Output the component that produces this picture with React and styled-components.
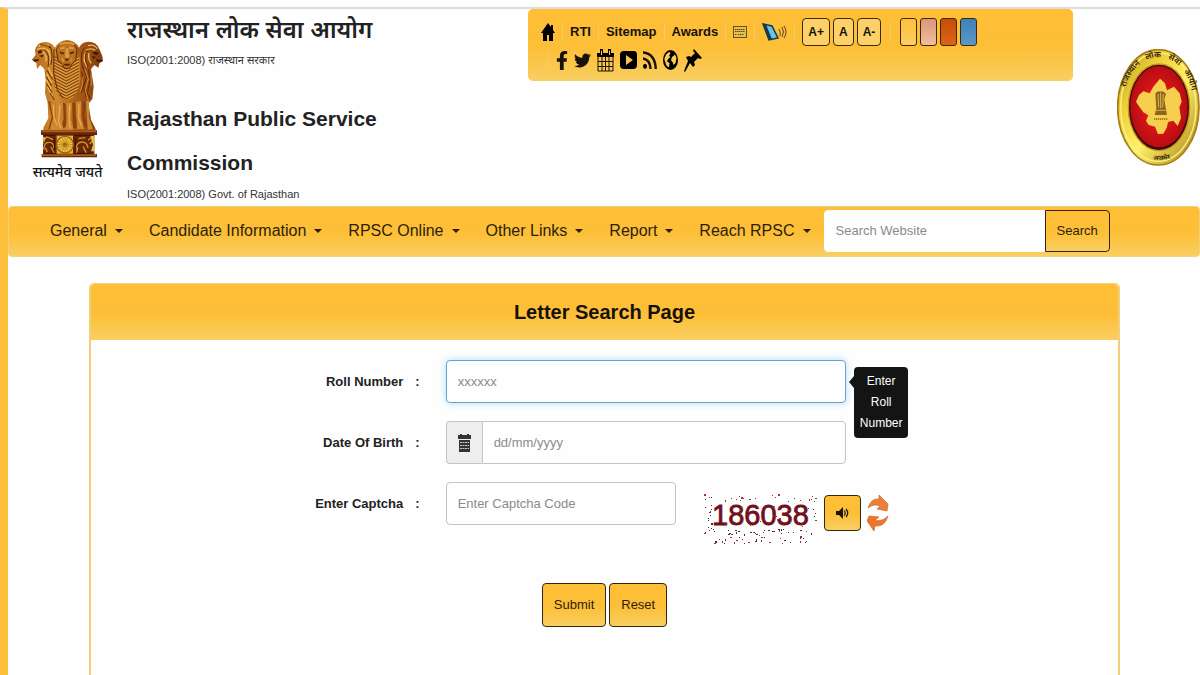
import React from "react";
import styled, { createGlobalStyle, css } from "styled-components";
import { FaFacebookF, FaTwitter } from "react-icons/fa";

const sans = '"Liberation Sans", "Noto Sans", sans-serif';
const gold = "linear-gradient(to bottom, #ffbe36 0%, #fdbf38 55%, #f9cf62 100%)";

const GlobalStyle = createGlobalStyle`
  *, *::before, *::after { box-sizing: border-box; }
  html { background: #fefefe; }
  body {
    margin: 0;
    font-family: ${sans};
    font-size: 13px;
    line-height: 20px;
    color: #222;
  }
  h1, h2, p, ul { margin: 0; padding: 0; }
  ul { list-style: none; }
  a { color: inherit; text-decoration: none; }
  input, button { font: inherit; }
`;

const Page = styled.div`
  padding-top: 7px;
`;

const Shell = styled.div`
  border-top: 2px solid #dcdcdc;
  border-left: 8px solid #fdbe3c;
  min-height: calc(100vh - 7px);
`;

const Header = styled.header`
  display: flex;
  align-items: flex-start;
  height: 197px;
`;

const Emblem = styled.figure`
  margin: 0;
  width: 119px;
  padding-top: 30px;
  display: flex;
  flex-direction: column;
  align-items: center;
  flex: none;
`;

const Motto = styled.figcaption`
  font-size: 14px;
  line-height: 28px;
  font-weight: 500;
  color: #111;
  white-space: nowrap;
`;

const Titles = styled.div`
  width: 401px;
  flex: none;
`;

const TitleHindi = styled.h1`
  font-size: 24px;
  line-height: 42px;
  font-weight: 600;
  white-space: nowrap;
`;

const Iso = styled.p`
  font-size: 11px;
  line-height: 18px;
  color: #333;
  white-space: nowrap;
`;

const Title = styled.h2`
  font-size: 21px;
  line-height: 44px;
  padding-top: 28px;
  max-width: 300px;
`;

const Tools = styled.div`
  flex: 1;
  max-width: 545px;
  height: 72px;
  padding: 8px 13px 0;
  border-radius: 5px;
  background: ${gold};
  color: #17120a;
`;

const ToolRow = styled.ul`
  display: flex;
  align-items: center;
  height: ${(p) => (p.$second ? 26 : 30)}px;
`;

const ToolItem = styled.li`
  display: flex;
  align-items: center;
  gap: ${(p) => p.$gap || 3}px;
  font-size: 13px;
  font-weight: 700;
`;

const Rule = styled.li`
  width: 1px;
  height: 18px;
  background: #f3cb74;
  margin: 0 ${(p) => (p.$wide ? 9 : 7)}px;
`;

const IconLink = styled.a`
  display: flex;
  svg { display: block; }
`;

const SizeButton = styled.button`
  height: 28px;
  padding: 0 5px;
  border: 1px solid #3a2a08;
  border-radius: 4px;
  background: #fdd068;
  color: #17120a;
  font-size: 12px;
  font-weight: 700;
`;

const Swatch = styled.button`
  width: 17px;
  height: 28px;
  padding: 0;
  border: 1px solid #3a2a08;
  border-radius: 3px;
  background: ${(p) => p.$fill};
`;

const SealBox = styled.div`
  margin-left: auto;
  padding-top: 40px;
  svg { display: block; }
`;

const Nav = styled.nav`
  display: flex;
  align-items: center;
  height: 51px;
  padding: 0 28px 2px;
  border: 1px solid #f3cf80;
  border-radius: 4px;
  background: ${gold};
`;

const NavLink = styled.a`
  display: flex;
  align-items: center;
  gap: 8px;
  padding: 0 13px;
  font-size: 16px;
  line-height: 24px;
  color: #2c1e08;
  white-space: nowrap;
  &::after {
    content: "";
    border: 4px solid transparent;
    border-top-color: currentColor;
    border-bottom: 0;
  }
`;

const SearchForm = styled.form`
  display: flex;
  height: 42px;
`;

const fieldBase = css`
  min-width: 0;
  height: 43px;
  padding: 0 11px;
  border: 1px solid #c4c4c4;
  border-radius: 4px;
  background: #fefefe;
  color: #555;
  font-size: 13px;
  outline: 0;
  &::placeholder { color: #8b8b8b; opacity: 1; }
`;

const SearchInput = styled.input`
  ${fieldBase}
  width: 221px;
  height: 42px;
  border-color: #fefefe;
  border-radius: 4px 0 0 4px;
`;

const Button = styled.button`
  height: ${(p) => p.$height || 44}px;
  padding: 0 11px;
  border: 1px solid #33260b;
  border-radius: ${(p) => (p.$attached ? "0 4px 4px 0" : "4px")};
  background: ${gold};
  color: #2c1e08;
  font-size: 13px;
`;

const Panel = styled.main`
  margin: 26px 80px 0 81px;
  border: 1px solid #f2d078;
  border-width: 1px 2px;
  border-bottom: 0;
  border-radius: 5px 5px 0 0;
  min-height: calc(100vh - 283px);
`;

const PanelTitle = styled.h1`
  height: 56px;
  line-height: 57px;
  text-align: center;
  font-size: 20px;
  color: #15100a;
  background: ${gold};
  border-radius: 4px 4px 0 0;
`;

const Form = styled.form`
  padding-top: 20px;
`;

const Row = styled.div`
  display: grid;
  grid-template-columns: 32% 39% 1fr;
  column-gap: 26px;
  align-items: center;
  margin-bottom: 18px;
`;

const Label = styled.label`
  display: flex;
  justify-content: flex-end;
  gap: 12px;
  font-weight: 700;
`;

const Field = styled.div`
  position: relative;
  display: flex;
  align-items: center;
  height: 43px;
`;

const Input = styled.input`
  ${fieldBase}
  flex: ${(p) => (p.$short ? "0 0 230px" : "1")};
  ${(p) => p.$active && css`
    border-color: #5fa5cf;
    box-shadow: 0 0 9px #b5dcf3;
  `}
  ${(p) => p.$joined && css`border-radius: 0 4px 4px 0;`}
`;

const Addon = styled.span`
  display: grid;
  place-items: center;
  width: 36px;
  height: 43px;
  border: 1px solid #c4c4c4;
  border-right: 0;
  border-radius: 4px 0 0 4px;
  background: #eee;
`;

const Tooltip = styled.div`
  position: absolute;
  z-index: 1;
  top: 7px;
  left: 100%;
  margin-left: 8px;
  width: 54px;
  padding: 4px 5px;
  border-radius: 4px;
  background: #141414;
  color: #fff;
  text-align: center;
  font-size: 12px;
  line-height: 21px;
  &::before {
    content: "";
    position: absolute;
    top: 9px;
    left: -5px;
    border: 6px solid transparent;
    border-right: 5px solid #141414;
    border-left: 0;
  }
`;

const Captcha = styled.div`
  display: flex;
  align-items: center;
  padding-left: 28px;
  gap: 6px;
  height: 43px;
`;

const CaptchaImage = styled.svg`
  flex: none;
  margin-top: 30px;
`;

const AudioButton = styled.button`
  display: grid;
  place-items: center;
  flex: none;
  width: 37px;
  height: 36px;
  margin-top: 19px;
  padding: 0;
  border: 1px solid #33260b;
  border-radius: 4px;
  background: ${gold};
`;

const RefreshButton = styled.button`
  flex: none;
  margin-top: 19px;
  padding: 0;
  border: 0;
  background: none;
  svg { display: block; }
`;

const Actions = styled.div`
  display: flex;
  justify-content: center;
  gap: 3px;
  padding-top: 40px;
`;

function Lions() {
  const chest = [];
  for (let y = 88; y < 210; y += 9) {
    chest.push(`M128 ${y - 8}L166 ${y + 12}L204 ${y - 8}`);
  }
  return (
    <svg width="73" height="119" viewBox="60 28 219 357" role="img" aria-label="Emblem">
      <defs>
        <linearGradient id="body" x1="0" x2="1">
          <stop offset="0" stopColor="#b5671c" />
          <stop offset=".35" stopColor="#d08a2e" />
          <stop offset=".6" stopColor="#b06018" />
          <stop offset="1" stopColor="#7d380d" />
        </linearGradient>
        <clipPath id="mane">
          <path d="M128 80Q166 60 206 80L208 150Q200 205 168 210Q136 205 126 150Z" />
        </clipPath>
      </defs>
      <path fill="url(#body)" d="M62 90L74 76L72 62Q78 36 104 37Q122 38 132 54Q142 33 168 31Q194 33 204 54Q212 36 232 36Q258 36 266 60L274 80L276 94L266 100L262 114L250 106L240 118L248 170L244 208L232 222L240 270L254 298L252 306L96 306L98 292L112 266L110 220L102 190L104 150L100 118L88 106L78 118L76 100Z" />
      <path fill="#8b420f" d="M111 212Q124 226 132 218L136 290L120 300L112 298L122 262ZM156 218L164 222L166 292L150 298L158 266ZM184 220L192 218L194 260L202 292L186 298ZM214 214L226 218L220 258L232 294L214 290Z" />
      <path fill="#cf8630" d="M118 220L132 219L134 262L144 292L132 300L116 300L126 264ZM137 218L154 220L150 270L158 298L138 300ZM167 220L183 219L180 266L188 300L162 300L170 268ZM195 217L211 215L210 262L220 298L198 298ZM225 214L234 212L234 264L246 298L230 300Z" />
      <path fill="none" stroke="#eab859" strokeWidth="3" d="M128 226L129 262L138 288M147 226L143 276L149 296M176 226L174 270L178 296M204 224L203 262L211 290" />
      <path fill="#c78026" d="M128 80Q166 60 206 80L208 150Q200 205 168 210Q136 205 126 150Z" />
      <g clipPath="url(#mane)">
        <path d={chest.join("")} fill="none" stroke="#6a3009" strokeWidth="2.5" />
        <path d={chest.join("")} fill="none" stroke="#e9ba5a" strokeWidth="2" transform="translate(0 4)" />
      </g>
      <path fill="#ba711f" stroke="#602707" strokeWidth="3" d="M136 60Q145 38 168 37Q190 38 198 60L194 92L181 106L176 116L160 116L154 104L141 92Z" />
      <path fill="#5a2507" d="M147 66L161 69L157 74L148 72ZM175 69L190 65L188 71L178 74ZM161 87H174L170 93H165ZM156 102H180L172 108H163Z" />
      <path fill="#d99c3f" d="M164 56H172L174 84H162ZM147 54L162 50L160 58L148 59ZM174 50L190 54L187 58L174 59ZM151 82L160 91L156 99ZM183 82L178 94L181 99ZM142 43Q168 29 195 43L187 46Q168 38 149 46Z" />
      <path fill="#3b1705" d="M80 64L94 62L91 70L83 72ZM66 90L84 88L82 94L70 96ZM254 65L264 72L256 76L244 70ZM254 89L274 91L272 96L258 96ZM84 78L98 76L94 83ZM243 79L255 82L247 87Z" />
      <path fill="none" stroke="#efb957" strokeWidth="4" d="M82 51Q98 38 114 50M78 60Q98 48 116 66M96 66Q109 77 104 95M109 59Q123 77 114 102M112 114L124 140M107 132L122 160M107 150L120 178M110 172L125 200M231 48Q248 42 259 57M224 62Q240 53 253 62M224 68Q214 88 226 106M234 70Q230 88 241 101M218 90L228 112" />
      <path fill="none" stroke="#642806" strokeWidth="3" d="M87 45Q105 42 120 56M100 60Q120 78 111 110M116 48Q128 67 120 105M108 122L125 150M106 141L122 169M107 162L123 189M117 190L130 211M220 54Q205 72 216 115M230 61Q215 80 231 112M214 110L226 140L218 173L226 204M232 119L237 150L229 192L237 207M211 125L220 158L211 190M129 58L128 130L139 180L156 205" />
      <path fill="none" stroke="#d08b31" strokeWidth="3" d="M222 119L232 148L223 181L231 211M216 142L215 162L207 188M240 134L241 169" />
      <path fill="#662708" d="M90 302H258V316H250V373H258V383H92V373H96V316H90Z" />
      <path fill="#a95e1c" d="M92 302H256V308H92ZM92 374H256V379H92Z" />
      <path fill="#e4b034" d="M137 318H186V372H137Z" />
      <circle cx="162" cy="345" r="25" fill="#f0c83d" stroke="#9c5d12" strokeWidth="4" />
      <path fill="none" stroke="#a56a17" strokeWidth="2" d="M162 321V369M138 345H186M145 328L179 362M179 328L145 362M153 323L171 367M171 323L153 367M140 336L184 354M184 336L140 354" />
      <circle cx="162" cy="345" r="6" fill="#a9681a" />
      <path fill="none" stroke="#d99232" strokeWidth="4" d="M98 360Q100 337 113 338Q130 338 128 355M103 354L109 367M120 352L130 370M98 330L108 322L126 330M194 361Q197 337 213 337Q228 337 231 355M201 353L196 370M216 350L226 370M236 343L247 330M231 332L245 321M202 327L223 324" />
      <path fill="#e7c23d" d="M238 319H250V365H240L246 345ZM96 321L104 324L98 343Z" />
      <path fill="none" stroke="#35150a" strokeWidth="3" d="M99 317H134M190 317H239M100 371H134M189 371H238M130 326V366M193 325V368" />
    </svg>
  );
}

function Seal() {
  return (
    <svg width="83" height="117" viewBox="51 57 249 351" role="img" aria-label="RPSC Ajmer">
      <defs>
        <linearGradient id="ring" x1="0" y1="0" x2="1" y2="1">
          <stop offset="0" stopColor="#bd981d" />
          <stop offset=".3" stopColor="#eed239" />
          <stop offset=".55" stopColor="#fff06a" />
          <stop offset="1" stopColor="#a58010" />
        </linearGradient>
        <radialGradient id="red">
          <stop offset=".4" stopColor="#e01818" />
          <stop offset="1" stopColor="#b80c12" />
        </radialGradient>
        <path id="upper" d="M78 276C52 172 103 82 176 82C249 82 298 172 273 286" />
        <path id="lower" d="M130 380Q180 404 240 374" />
      </defs>
      <ellipse cx="175" cy="232" rx="122" ry="173" fill="url(#ring)" stroke="#a67d17" strokeWidth="5" />
      <ellipse cx="175" cy="231" rx="113" ry="163" fill="none" stroke="#fff083" strokeWidth="4" />
      <ellipse cx="177" cy="232" rx="92" ry="130" fill="#3b0c0a" stroke="#c8971c" strokeWidth="4" />
      <ellipse cx="177" cy="230" rx="86" ry="122" fill="url(#red)" />
      <path fill="#f7cf4e" d="M180 146L195 160L201 181L222 170L239 190L245 215L238 232L243 264L233 288L220 272L204 276L201 292L190 311L174 312L165 290L146 285L138 272L145 256L130 247L118 230L108 215L117 195L130 184L149 190L160 170Z" />
      <path fill="#8a651d" d="M166 191Q173 181 181 185Q190 181 198 192L193 207L197 233L201 255H164L169 234L167 207Z" />
      <path fill="none" stroke="#e0b44d" strokeWidth="3" d="M174 192L176 232M182 188V235M190 192L188 232M168 241H197" />
      <path fill="none" stroke="#8a651d" strokeWidth="4" d="M162 267H202" strokeDasharray="4 2" />
      <text fill="#2e2105" fontSize="25" fontWeight="600" style={{ whiteSpace: "pre" }}>
        <textPath href="#upper" startOffset="50%" textAnchor="middle">{"राजस्थान   लोक   सेवा   आयोग"}</textPath>
      </text>
      <text fill="#2e2105" fontSize="20" fontWeight="600">
        <textPath href="#lower" startOffset="50%" textAnchor="middle">अजमेर</textPath>
      </text>
    </svg>
  );
}

const HomeIcon = () => (
  <svg width="14" height="18" viewBox="0 0 14 18"><path d="M7 0L10 4V2H12V7L14 10H12V18H8V12H6V18H2V10H0Z" /></svg>
);
const KeyboardIcon = () => (
  <svg width="14" height="12" viewBox="0 0 14 12">
    <rect x=".5" y=".5" width="13" height="11" fill="#e4bf50" stroke="#6b5214" />
    <path stroke="#5d4a16" d="M2 3.5H12M2 5.5H12M2 8.5H4M5 8.5H11" strokeDasharray="1.5 .5" />
  </svg>
);
const ReaderIcon = () => (
  <svg width="25" height="18" viewBox="0 0 25 18">
    <path fill="#62c5e5" stroke="#17394a" strokeWidth="1.5" d="M1 1L10 3L16 15L7 17Z" />
    <path fill="#17394a" d="M1 1L4 1.6L10 16.3L7 17Z" />
    <path fill="none" stroke="#50482c" d="M17 6Q19 9 18 13M20 4Q23 9 20 14M22 3Q26 9 22 15" />
  </svg>
);
const CalendarGridIcon = () => (
  <svg width="17" height="23" viewBox="0 0 17 23">
    <path fill="none" stroke="currentColor" d="M1 5H16V22H1ZM1 12.5H16M1 17.5H16M5 8V22M8.5 8V22M12 8V22" />
    <path d="M0 4H3V0H6V4H11V0H14V4H17V8H0Z" />
    <path stroke="#fdc74e" d="M4.5 1.5V6M12.5 1.5V6" />
  </svg>
);
const VideoIcon = () => (
  <svg width="17" height="18" viewBox="0 0 17 18">
    <path fillRule="evenodd" d="M3 0Q8 -.5 14 0Q17 0 17 4V14Q17 17.5 14 18Q8 18.5 3 18Q0 17.5 0 14V4Q0 .5 3 0ZM6 4V14L13 9Z" />
  </svg>
);
const FeedIcon = () => (
  <svg width="14" height="18" viewBox="0 0 14 18">
    <ellipse cx="2" cy="15.3" rx="2" ry="2.5" />
    <path fill="none" stroke="currentColor" strokeWidth="2.4" d="M0 7.5Q7 8.5 7.6 18M0 1.5Q12 2.5 12.8 18" />
  </svg>
);
const GlobeIcon = () => (
  <svg width="15" height="20" viewBox="0 0 15 20">
    <ellipse cx="7.5" cy="10" rx="7.5" ry="10" />
    <path fill="#fdca57" d="M1.3 9L3 4.5L6 2L7.5 3L6 6L7.5 7L5 9L4 11.5L6.5 13L6 17.5L3.4 15.6ZM9 7L12 4.5L13.5 8L12.5 13L10.5 15L9.6 12L8 10.5Z" />
  </svg>
);
const PinIcon = () => (
  <svg width="18" height="23" viewBox="0 0 18 23">
    <path d="M10 0L18 9L16 10L14 9L10 13L11 16L9 18L6 14L1 23L0 22L4 12L2 8L5 7L7 8L11 4L9 2Z" />
  </svg>
);
const DateIcon = () => (
  <svg width="13" height="18" viewBox="0 0 13 18">
    <path fill="#333" d="M0 1H2V0H4V1H9V0H11V1H13V5H0ZM1 6H12V18H1Z" />
    <path stroke="#c9c9c9" d="M2 8.5H11M2 11.5H11M2 14.5H11" strokeDasharray="2 .5" />
  </svg>
);
const SoundIcon = () => (
  <svg width="13" height="12" viewBox="0 0 13 12">
    <path fill="#1b1304" d="M0 4H3L7 0V12L3 8H0Z" />
    <path fill="none" stroke="#1b1304" strokeWidth="1.2" d="M8.3 3.5Q10 6 8.3 8.5M10 2Q13.5 6 10 10" />
  </svg>
);
const RefreshIcon = () => (
  <svg width="22" height="36" viewBox="0 0 22 36">
    <path fill="#ed8038" stroke="#cf6a2b" strokeWidth=".7" d="M1 13Q4 3 12 4V0L21 9L20 16L10 14L13 11Q7 8 1 13Z" />
    <path fill="#ee752c" stroke="#cf6a2b" strokeWidth=".7" d="M21 21Q18 32 8 31L7 36L0 26L2 21L12 22L8 25Q15 27 21 21Z" />
  </svg>
);

const specks = Array.from({ length: 200 }, (_, i) => {
  const x = (i * 47 + ((i * i * 13) % 31)) % 114;
  const y = (i * 29 + ((i * i * 7) % 23)) % 50;
  return { x, y, red: i % 3 === 0 };
}).filter((s, i) => s.x < 10 || s.x > 108 || s.y > 34 || i % 3 === 0);

function CaptchaCode() {
  return (
    <CaptchaImage width="114" height="50" viewBox="0 0 114 50" fontFamily={sans}>
      <text x="8" y="31" fontSize="29" fill="#70101a" stroke="#70101a" strokeWidth=".8">186038</text>
      {specks.map((s, i) => (
        <rect key={i} x={s.x} y={s.y} width={i % 4 ? 1 : 2} height={i % 5 ? 1 : 2} fill={s.red ? "#a4313a" : "#3d3335"} />
      ))}
    </CaptchaImage>
  );
}

const menu = ["General", "Candidate Information", "RPSC Online", "Other Links", "Report", "Reach RPSC"];

const swatches = [
  ["Yellow theme", "linear-gradient(#fdbf3a, #f9cf62)"],
  ["Pink theme", "linear-gradient(#dd9478, #eec0a0)"],
  ["Orange theme", "linear-gradient(#c84c08, #dc6418)"],
  ["Blue theme", "linear-gradient(#3f80b8, #5c98c6)"],
];

const social = [
  ["Facebook", <FaFacebookF size={21} style={{ width: 12 }} />],
  ["Twitter", <FaTwitter size={17} />],
  ["Calendar", <CalendarGridIcon />],
  ["Videos", <VideoIcon />],
  ["News feed", <FeedIcon />],
  ["Website", <GlobeIcon />],
  ["Pinned", <PinIcon />],
];

export default function App() {
  return (
    <Page>
      <GlobalStyle />
      <Shell>
        <Header>
          <Emblem>
            <Lions />
            <Motto lang="hi">सत्यमेव जयते</Motto>
          </Emblem>
          <Titles>
            <TitleHindi lang="hi">राजस्थान लोक सेवा आयोग</TitleHindi>
            <Iso>ISO(2001:2008) राजस्थान सरकार</Iso>
            <Title>Rajasthan Public Service Commission</Title>
            <Iso>ISO(2001:2008) Govt. of Rajasthan</Iso>
          </Titles>
          <Tools>
            <ToolRow>
              <ToolItem><IconLink href="#" aria-label="Home"><HomeIcon /></IconLink></ToolItem>
              <Rule />
              <ToolItem><a href="#">RTI</a></ToolItem>
              <Rule />
              <ToolItem><a href="#">Sitemap</a></ToolItem>
              <Rule />
              <ToolItem><a href="#">Awards</a></ToolItem>
              <Rule />
              <ToolItem><IconLink href="#" aria-label="Keyboard"><KeyboardIcon /></IconLink></ToolItem>
              <Rule />
              <ToolItem><IconLink href="#" aria-label="Screen reader"><ReaderIcon /></IconLink></ToolItem>
              <Rule />
              <ToolItem>
                <SizeButton type="button">A+</SizeButton>
                <SizeButton type="button">A</SizeButton>
                <SizeButton type="button">A-</SizeButton>
              </ToolItem>
              <Rule $wide />
              <ToolItem>
                {swatches.map(([name, fill]) => (
                  <Swatch key={name} type="button" aria-label={name} $fill={fill} />
                ))}
              </ToolItem>
            </ToolRow>
            <ToolRow $second>
              <Rule />
              <ToolItem $gap={6}>
                {social.map(([name, icon]) => (
                  <IconLink key={name} href="#" aria-label={name}>{icon}</IconLink>
                ))}
              </ToolItem>
            </ToolRow>
          </Tools>
          <SealBox><Seal /></SealBox>
        </Header>
        <Nav>
          {menu.map((item) => <NavLink key={item} href="#">{item}</NavLink>)}
          <SearchForm>
            <SearchInput aria-label="Search Website" placeholder="Search Website" />
            <Button type="button" $attached $height={42}>Search</Button>
          </SearchForm>
        </Nav>
        <Panel>
          <PanelTitle>Letter Search Page</PanelTitle>
          <Form>
            <Row>
              <Label htmlFor="roll"><span>Roll Number</span><span>:</span></Label>
              <Field>
                <Input id="roll" placeholder="xxxxxx" $active />
                <Tooltip role="tooltip">Enter Roll Number</Tooltip>
              </Field>
            </Row>
            <Row>
              <Label htmlFor="dob"><span>Date Of Birth</span><span>:</span></Label>
              <Field>
                <Addon><DateIcon /></Addon>
                <Input id="dob" placeholder="dd/mm/yyyy" $joined />
              </Field>
            </Row>
            <Row>
              <Label htmlFor="captcha"><span>Enter Captcha</span><span>:</span></Label>
              <Field>
                <Input id="captcha" placeholder="Enter Captcha Code" $short />
                <Captcha>
                  <CaptchaCode />
                  <AudioButton type="button" aria-label="Play captcha"><SoundIcon /></AudioButton>
                  <RefreshButton type="button" aria-label="New captcha"><RefreshIcon /></RefreshButton>
                </Captcha>
              </Field>
            </Row>
            <Actions>
              <Button type="button">Submit</Button>
              <Button type="reset">Reset</Button>
            </Actions>
          </Form>
        </Panel>
      </Shell>
    </Page>
  );
}
